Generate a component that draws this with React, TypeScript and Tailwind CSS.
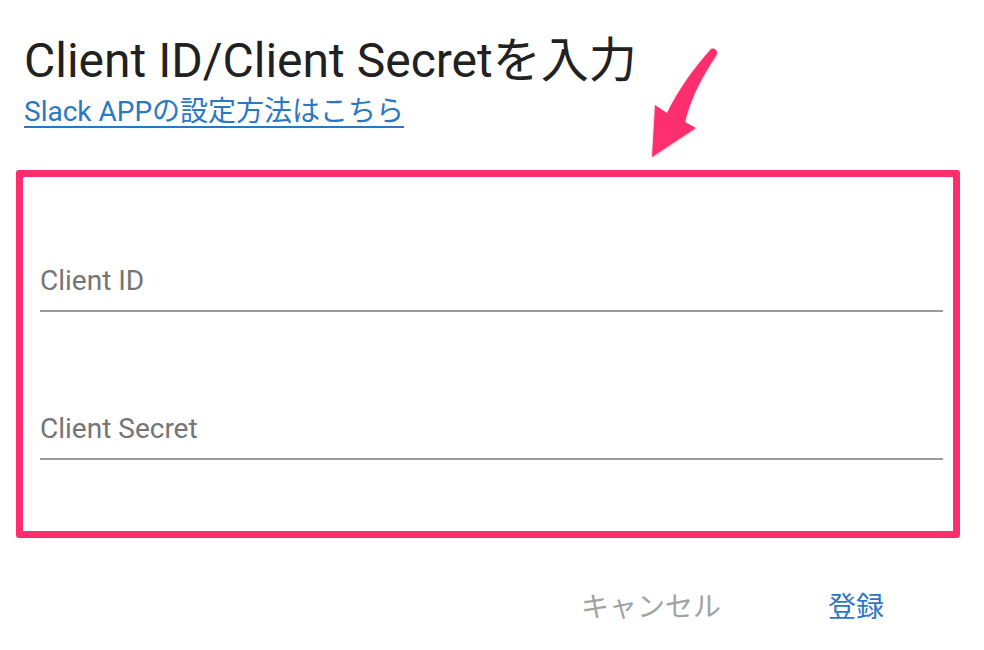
import React from 'react';

const font = { fontFamily: 'Roboto, "Noto Sans CJK JP", sans-serif' };

interface FieldProps {
  label: string;
  className?: string;
}

const Field: React.FC<FieldProps> = ({ label, className }) => (
  <div className={className}>
    <div className="text-[28px] leading-[32px] text-[#757575]">{label}</div>
    <div className="mt-[13px] h-[2px] bg-[#9a9a9a]" />
  </div>
);

const Arrow: React.FC = () => (
  <svg
    className="absolute left-[640px] top-[40px]"
    width="90"
    height="130"
    viewBox="640 40 90 130"
    aria-hidden="true"
  >
    <defs>
      <filter id="sh" x="-20%" y="-20%" width="140%" height="140%">
        <feDropShadow dx="0" dy="1" stdDeviation="1.2" floodColor="#000" floodOpacity="0.25" />
      </filter>
    </defs>
    <path
      d="M711,49 C715,47 719,52 716,56 C704,74 692,94 685,122 L696,128 L652,157 L655,105 L667,113 C678,90 694,68 711,49 Z"
      fill="#ff2d6e"
      filter="url(#sh)"
    />
  </svg>
);

export default function App() {
  return (
    <div className="relative h-[650px] w-[984px] overflow-hidden bg-white" style={font}>
      <Arrow />
      <div className="px-[16px] pt-[33px]">
        <h1 className="pl-[8px] text-[48px] font-normal leading-[56px] text-[#212121]">
          Client ID/Client Secretを入力
        </h1>
        <a
          href="#"
          className="ml-[8px] mt-[6px] inline-block text-[28px] leading-[34px] text-[#2b78c2] underline decoration-2 underline-offset-[5px]"
        >
          Slack APPの設定方法はこちら
        </a>

        <div className="mt-[41px] w-[944px] rounded-[3px] border-[7px] border-[#ff2d6e] pb-[71px] pl-[17px] pr-[10px] pt-[88px]">
          <Field label="Client ID" />
          <Field label="Client Secret" className="mt-[101px]" />
        </div>

        <div className="mt-[53px] flex justify-end gap-[107px] pr-[84px] text-[28px] leading-[34px]">
          <button className="text-[#a2a2a2]">キャンセル</button>
          <button className="text-[#2f77c0]">登録</button>
        </div>
      </div>
    </div>
  );
}
